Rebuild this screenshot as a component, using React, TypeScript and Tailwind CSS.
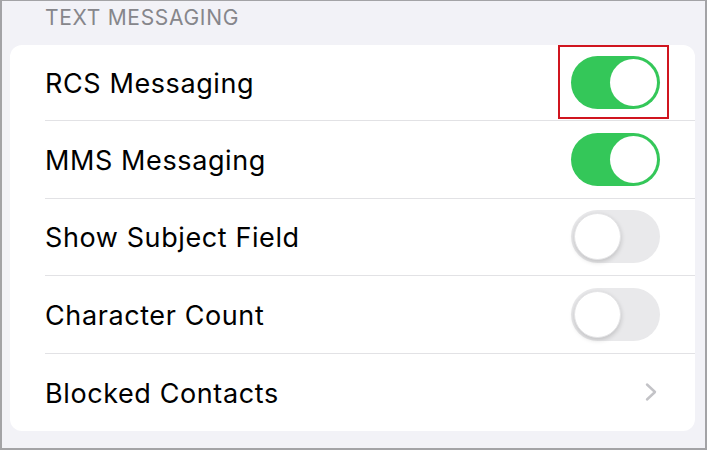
import React from 'react'

type Row = { label: string; kind: 'on' | 'off' | 'link'; highlight?: boolean }

const ROWS: Row[] = [
  { label: 'RCS Messaging', kind: 'on', highlight: true },
  { label: 'MMS Messaging', kind: 'on' },
  { label: 'Show Subject Field', kind: 'off' },
  { label: 'Character Count', kind: 'off' },
  { label: 'Blocked Contacts', kind: 'link' },
]

function Toggle({ on }: { on: boolean }) {
  return (
    <div
      className={
        on
          ? 'w-[89px] h-[53px] rounded-full bg-[#34c759] flex items-center justify-end p-[3px]'
          : 'w-[89px] h-[53px] rounded-full bg-[#e9e9eb] flex items-center justify-start p-[3px]'
      }
    >
      <div
        className={
          on
            ? 'w-[47px] h-[47px] rounded-full bg-white'
            : 'w-[47px] h-[47px] rounded-full bg-white shadow-[0_2px_5px_rgba(0,0,0,0.18)] border border-[#e4e4e6]'
        }
      />
    </div>
  )
}

function Chevron() {
  return (
    <svg width="14" height="20" viewBox="0 0 14 20" fill="none">
      <path d="M3 2.5 L11 10 L3 17.5" stroke="#c3c3c7" strokeWidth="2.4" strokeLinecap="round" strokeLinejoin="round" />
    </svg>
  )
}

export default function App() {
  return (
    <div
      className="w-[707px] h-[450px] bg-[#f2f2f7] border-2 border-t border-[#a3a3a6] overflow-hidden"
      style={{ fontFamily: 'Inter, "Noto Sans", "Liberation Sans", sans-serif' }}
    >
      <div className="pl-[43px] pt-[4px] h-[44px] text-[21px] leading-[26px] text-[#86868b] tracking-[0.7px]">
        TEXT MESSAGING
      </div>
      <div className="ml-[8px] mr-[10px] bg-white rounded-[12px]">
        {ROWS.map((row, i) => (
          <div key={row.label} className={i === 0 ? 'pl-[35px] h-[76px]' : 'pl-[35px] h-[77.5px]'}>
            <div
              className={
                i < ROWS.length - 1
                  ? 'h-full flex items-center border-b border-[#e2e2e5]'
                  : 'h-full flex items-center'
              }
            >
              <span className="flex-1 pt-[3px] text-[27px] text-black tracking-[0.6px]">{row.label}</span>
              {row.kind === 'link' ? (
                <div className="w-[89px] mr-[35px] flex justify-end pr-[2px]">
                  <Chevron />
                </div>
              ) : (
                <div className="mr-[35px] relative">
                  <Toggle on={row.kind === 'on'} />
                  {row.highlight && (
                    <div className="absolute -left-[13px] -right-[9px] -top-[11px] -bottom-[10px] border-2 border-[#d0151f]" />
                  )}
                </div>
              )}
            </div>
          </div>
        ))}
      </div>
    </div>
  )
}
